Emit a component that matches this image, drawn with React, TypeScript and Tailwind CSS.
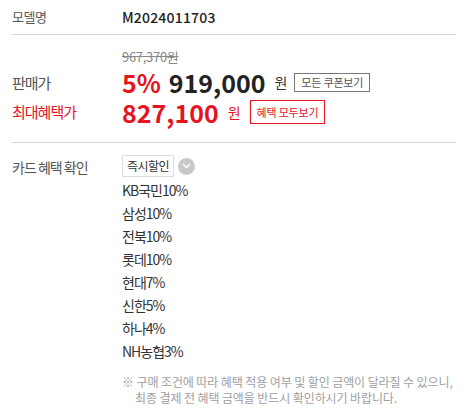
const cards = ["KB국민10%", "삼성10%", "전북10%", "롯데10%", "현대7%", "신한5%", "하나4%", "NH농협3%"];

const font = { fontFamily: '"Noto Sans CJK KR", "Noto Sans", sans-serif' };

export default function App() {
  return (
    <div className="w-[468px] h-[410px] bg-white px-[12px] text-[#333]" style={font}>
      <div className="flex h-[35px] items-center border-b border-[#d6d6d6]">
        <div className="w-[110px] text-[13px] tracking-[-0.5px] text-[#555]">모델명</div>
        <div className="text-[14px] font-medium tracking-[0.2px] text-[#222]">M2024011703</div>
      </div>

      <div className="border-b border-[#d6d6d6] pt-[12px] pb-[15px]">
        <div className="pl-[110px] text-[13px] leading-[20px] tracking-[-0.3px] text-[#888] line-through">967,370원</div>
        <div className="flex h-[30px] items-center">
          <div className="w-[110px] pt-[2px] text-[15px] tracking-[-1px] text-[#555]">판매가</div>
          <div className="flex items-center">
            <span className="text-[25px] font-bold leading-[30px] text-[#e5141f]">5%</span>
            <span className="ml-[8px] text-[25px] font-bold leading-[30px] text-[#222]">919,000</span>
            <span className="ml-[9px] text-[14px] text-[#333]">원</span>
            <button className="ml-[7px] h-[19px] border border-[#777] px-[6px] text-[11px] leading-none tracking-[-0.2px] text-[#555]">
              모든 쿠폰보기
            </button>
          </div>
        </div>
        <div className="flex h-[30px] items-center">
          <div className="w-[110px] pt-[1px] text-[15px] tracking-[-1px] text-[#e5141f]">최대혜택가</div>
          <div className="flex items-center">
            <span className="text-[25px] font-bold leading-[30px] text-[#e5141f]">827,100</span>
            <span className="ml-[9px] text-[14px] text-[#e5141f]">원</span>
            <button className="ml-[9px] h-[24px] border border-[#e5141f] px-[6px] text-[11px] leading-none tracking-[-0.2px] text-[#e5141f]">
              혜택 모두보기
            </button>
          </div>
        </div>
      </div>

      <div className="flex pt-[12px]">
        <div className="w-[110px] pt-[2px] text-[14px] tracking-[-1px] text-[#555]">카드 혜택 확인</div>
        <div>
          <div className="flex items-center gap-[4px]">
            <span className="flex h-[22px] items-center border border-[#ddd] px-[4px] text-[12px] tracking-[-0.5px] text-[#333]">
              즉시할인
            </span>
            <span className="flex h-[17px] w-[17px] items-center justify-center rounded-full bg-[#c8c8c8]">
              <svg width="9" height="6" viewBox="0 0 9 6" fill="none">
                <path d="M1 1l3.5 3.5L8 1" stroke="#fff" strokeWidth="1.5" />
              </svg>
            </span>
          </div>
          <ul className="mt-[2px]">
            {cards.map((c) => (
              <li key={c} className="h-[23px] text-[14px] leading-[23px] tracking-[-1px] text-[#333]">
                {c}
              </li>
            ))}
          </ul>
          <div className="mt-[11px] whitespace-nowrap text-[12px] leading-[16px] tracking-[-0.1px] text-[#a0a0a0]">
            <div>※ 구매 조건에 따라 혜택 적용 여부 및 할인 금액이 달라질 수 있으니,</div>
            <div className="pl-[13px]">최종 결제 전 혜택 금액을 반드시 확인하시기 바랍니다.</div>
          </div>
        </div>
      </div>
    </div>
  );
}
